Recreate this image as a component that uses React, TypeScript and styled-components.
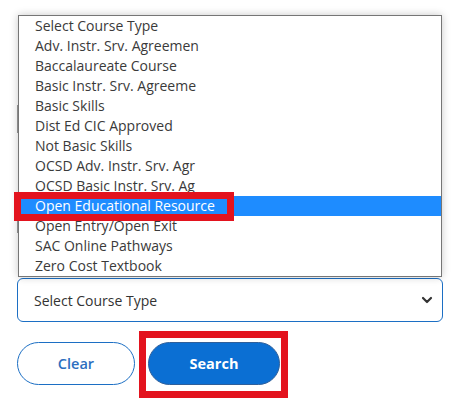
import { createGlobalStyle } from "styled-components";
import styled from "styled-components";

const options = [
  "Select Course Type",
  "Adv. Instr. Srv. Agreemen",
  "Baccalaureate Course",
  "Basic Instr. Srv. Agreeme",
  "Basic Skills",
  "Dist Ed CIC Approved",
  "Not Basic Skills",
  "OCSD Adv. Instr. Srv. Agr",
  "OCSD Basic Instr. Srv. Ag",
  "Open Educational Resource",
  "Open Entry/Open Exit",
  "SAC Online Pathways",
  "Zero Cost Textbook",
];

const selectedIndex = 9;

const App = () => {
  return (
    <>
      <GlobalStyle />
      <Page>
        <HiddenArea>
          <HiddenField $top={105} />
          <HiddenField $top={205} />
        </HiddenArea>

        <SelectBox>
          <span>Select Course Type</span>
          <svg width="12" height="8" viewBox="0 0 12 8">
            <path
              d="M2 2l4 4 4-4"
              fill="none"
              stroke="#333"
              strokeWidth="2.2"
              strokeLinecap="round"
              strokeLinejoin="round"
            />
          </svg>
        </SelectBox>

        <Actions>
          <ClearButton>Clear</ClearButton>
          <SearchButton>Search</SearchButton>
        </Actions>

        <OptionList>
          {options.map((label, i) => (
            <Option key={label} $active={i === selectedIndex}>
              {label}
            </Option>
          ))}
        </OptionList>

        <Highlight $left={14} $top={192} $width={220} $height={29} />
        <Highlight $left={139} $top={331} $width={149} $height={67} />
      </Page>
    </>
  );
};

export default App;

const GlobalStyle = createGlobalStyle`
  html, body {
    margin: 0;
    background: #fff;
  }

  body {
    font-family: "Open Sans", "Liberation Sans", sans-serif;
  }
`;

const Page = styled.div`
  position: relative;
  width: 461px;
  height: 407px;
  padding: 0 18px 0 17px;
  box-sizing: border-box;
  display: flex;
  flex-direction: column;
`;

const HiddenArea = styled.div`
  position: relative;
  height: 278px;
`;

const HiddenField = styled.div<{ $top: number }>`
  position: absolute;
  left: 0;
  top: ${(p) => p.$top}px;
  width: 200px;
  height: 28px;
  border-left: 1px solid #9a9a9a;
`;

const SelectBox = styled.div`
  height: 44px;
  box-sizing: border-box;
  border: 1px solid #1c6fc4;
  border-radius: 6px;
  display: flex;
  align-items: center;
  justify-content: space-between;
  padding: 0 9px 0 16px;
  font-size: 14px;
  color: #333;
`;

const Actions = styled.div`
  display: flex;
  gap: 13px;
  margin-top: 20px;
`;

const PillButton = styled.button`
  appearance: none;
  height: 43px;
  border-radius: 22px;
  font-family: "Open Sans", "Liberation Sans", sans-serif;
  font-size: 14.5px;
  font-weight: 700;
  cursor: pointer;
  box-sizing: border-box;
`;

const ClearButton = styled(PillButton)`
  width: 118px;
  background: #fff;
  color: #2c6fc0;
  border: 1px solid #1c6fc4;
  font-weight: 600;
`;

const SearchButton = styled(PillButton)`
  width: 132px;
  background: #0b6fd3;
  color: #fff;
  border: 1px solid #2f5f9a;
`;

const OptionList = styled.div`
  position: absolute;
  left: 18px;
  top: 15px;
  width: 424px;
  box-sizing: border-box;
  border: 1px solid #767676;
  background: #fff;
  box-shadow: 0 0 8px rgba(0, 0, 0, 0.22);
  display: flex;
  flex-direction: column;
`;

const Option = styled.div<{ $active: boolean }>`
  height: 20px;
  line-height: 20px;
  padding-left: 16px;
  font-size: 14px;
  white-space: nowrap;
  color: ${(p) => (p.$active ? "#fff" : "#3a3a3a")};
  background: ${(p) => (p.$active ? "#1e8cff" : "transparent")};
`;

const Highlight = styled.div<{
  $left: number;
  $top: number;
  $width: number;
  $height: number;
}>`
  position: absolute;
  left: ${(p) => p.$left}px;
  top: ${(p) => p.$top}px;
  width: ${(p) => p.$width}px;
  height: ${(p) => p.$height}px;
  box-sizing: border-box;
  border: 7px solid #e3131e;
  pointer-events: none;
`;
